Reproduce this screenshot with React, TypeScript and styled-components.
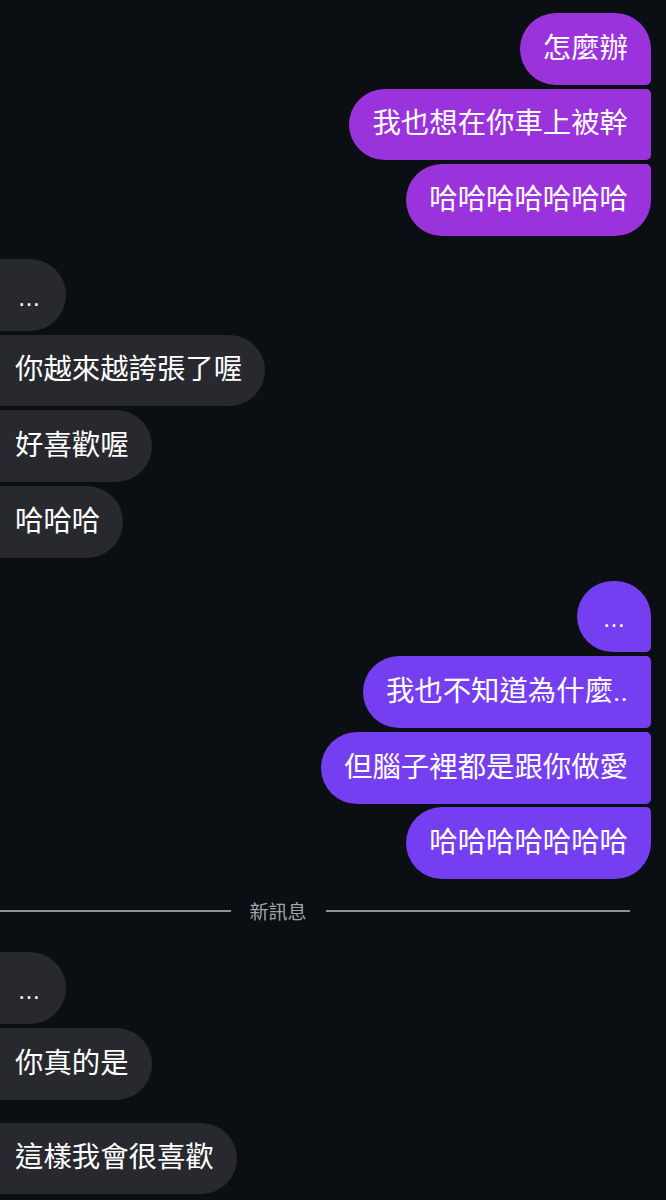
import React from "react"
import styled, { createGlobalStyle, css } from "styled-components"

const GlobalStyle = createGlobalStyle`
  html, body {
    margin: 0;
    padding: 0;
    background: #0b0e13;
    overflow: hidden;
  }
  body {
    font-family: Roboto, "Noto Sans CJK TC", "Noto Sans", sans-serif;
  }
`

const Screen = styled.div`
  width: 666px;
  height: 1200px;
  overflow: hidden;
  background: #0b0e13;
  padding-top: 13px;
  box-sizing: border-box;
`

const Thread = styled.div`
  display: flex;
  flex-direction: column;
  gap: 23px;
`

const Group = styled.div<{ $side: "me" | "them" }>`
  display: flex;
  flex-direction: column;
  gap: 3.8px;
  align-items: ${(p) => (p.$side === "me" ? "flex-end" : "flex-start")};
  padding-right: ${(p) => (p.$side === "me" ? "15px" : "0")};
`

type Pos = "first" | "middle" | "last" | "single"

const BIG = "36px"
const SMALL = "5px"

const Bubble = styled.div<{ $side: "me" | "them"; $pos: Pos; $tone?: "pink" | "violet" }>`
  box-sizing: border-box;
  height: 71.8px;
  display: flex;
  align-items: center;
  padding: 0 23px;
  font-size: 28.4px;
  line-height: 36px;
  color: #ffffff;
  white-space: nowrap;
  ${(p) =>
    p.$side === "me"
      ? css`
          background: ${p.$tone === "pink" ? "#9b33dd" : "#753ef1"};
          border-radius: ${BIG}
            ${p.$pos === "first" || p.$pos === "single" ? BIG : SMALL}
            ${p.$pos === "last" || p.$pos === "single" ? BIG : SMALL} ${BIG};
        `
      : css`
          background: #27292e;
          margin-left: -40px;
          padding-left: 55px;
          border-radius: ${BIG};
        `}
`

const Dots = styled.span`
  font-family: "DejaVu Sans", sans-serif;
  font-size: 22px;
  padding: 0 3px;
  position: relative;
  top: 4px;
`

const Divider = styled.div`
  display: flex;
  align-items: center;
  gap: 19px;
  margin: -1px 36px 8px -74px;
  height: 20px;
`

const Line = styled.div`
  flex: 1;
  height: 2px;
  background: #8f9398;
`

const DividerLabel = styled.span`
  font-size: 19px;
  line-height: 20px;
  color: #a2a6ab;
  font-family: "Noto Sans CJK TC", sans-serif;
`

type Msg = { text: string; dots?: boolean }

const posOf = (i: number, n: number): Pos =>
  n === 1 ? "single" : i === 0 ? "first" : i === n - 1 ? "last" : "middle"

const MyGroup = ({ items, tone }: { items: Msg[]; tone: "pink" | "violet" }) => (
  <Group $side="me">
    {items.map((m, i) => (
      <Bubble key={i} $side="me" $tone={tone} $pos={posOf(i, items.length)}>
        {m.dots ? <Dots>…</Dots> : m.text}
      </Bubble>
    ))}
  </Group>
)

const TheirGroup = ({ items }: { items: Msg[] }) => (
  <Group $side="them">
    {items.map((m, i) => (
      <Bubble key={i} $side="them" $pos={posOf(i, items.length)}>
        {m.dots ? <Dots>…</Dots> : m.text}
      </Bubble>
    ))}
  </Group>
)

export default function App() {
  return (
    <>
      <GlobalStyle />
      <Screen>
        <Thread>
          <MyGroup
            tone="pink"
            items={[{ text: "怎麼辦" }, { text: "我也想在你車上被幹" }, { text: "哈哈哈哈哈哈哈" }]}
          />
          <TheirGroup
            items={[{ text: "", dots: true }, { text: "你越來越誇張了喔" }, { text: "好喜歡喔" }, { text: "哈哈哈" }]}
          />
          <MyGroup
            tone="violet"
            items={[
              { text: "", dots: true },
              { text: "我也不知道為什麼.." },
              { text: "但腦子裡都是跟你做愛" },
              { text: "哈哈哈哈哈哈哈" },
            ]}
          />
          <Divider>
            <Line />
            <DividerLabel>新訊息</DividerLabel>
            <Line />
          </Divider>
          <TheirGroup items={[{ text: "", dots: true }, { text: "你真的是" }]} />
          <TheirGroup items={[{ text: "這樣我會很喜歡" }]} />
        </Thread>
      </Screen>
    </>
  )
}
